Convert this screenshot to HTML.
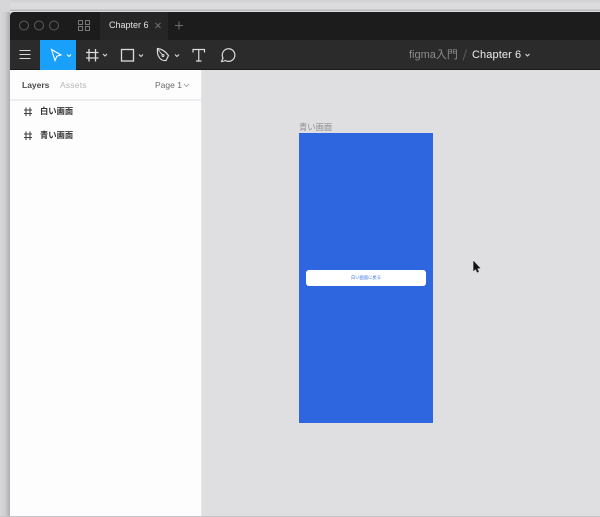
<!DOCTYPE html>
<html lang="ja">
<head>
<meta charset="utf-8">
<style>
html,body{margin:0;padding:0;width:600px;height:517px;overflow:hidden;background:#dfdee0}
*{box-sizing:border-box}
body{position:relative;font-family:"Liberation Sans","Noto Sans CJK JP",sans-serif}
.a{position:absolute}
.t{position:absolute;white-space:nowrap;line-height:1}
svg{position:absolute;overflow:visible}
#w{position:absolute;left:0;top:0;width:600px;height:517px;filter:blur(.35px)}
</style>
</head>
<body>
<div id="w">
<div class="a" style="left:0;top:0;width:600px;height:11px;background:linear-gradient(#cfced0,#dddcde 4px,#d9d8da 9px,#a9a9ab)"></div>
<div class="a" style="left:0;top:0;width:10px;height:517px;background:linear-gradient(90deg,#d8d7d9,#cfced0 5px,#aeadb0)"></div>
<div class="a" style="left:0;top:0;width:10px;height:12px;background:#d7d6d8"></div>

<div class="a" style="left:10px;top:12px;width:590px;height:28px;background:#1c1c1d;border-top-left-radius:4px"></div>
<div class="a" style="left:100px;top:12px;width:68px;height:28px;background:#262627"></div>
<div class="a" style="left:10px;top:40px;width:590px;height:30px;background:#2b2b2c;border-bottom:1px solid #1a1a1b"></div>

<svg style="left:0;top:0" width="600" height="70" fill="none" stroke="#5c5c5d" stroke-width="1">
<circle cx="24" cy="25.5" r="4.5"/><circle cx="39" cy="25.500" r="4.5"/><circle cx="54" cy="25.5" r="4.5"/>
<g stroke="#77777a"><rect x="78.5" y="20.5" width="4" height="4"/><rect x="85.5" y="20.5" width="4" height="4"/><rect x="78.5" y="26.5" width="4" height="4"/><rect x="85.5" y="26.5" width="4" height="4"/></g>
<path d="M155.500 23l5 5M160.500 23l-5 5" stroke="#6f6f70"/>
<path d="M179 21.500v8M175 25.500h8" stroke="#6f6f70"/>
</svg>
<div class="t" style="left:109px;top:21px;font-size:9px;color:#e2e2e2">Chapter 6</div>

<div class="a" style="left:40px;top:40px;width:36px;height:30px;background:#18a0fb"></div>
<svg style="left:0;top:0" width="600" height="70" fill="none" stroke="#dcdcdc" stroke-width="1.100">
<path d="M19.500 50.500h11M19.500 54.500h11M19.500 58.500h11" stroke="#d8d8d8"/>
<path d="M51.500 49.500l9.500 5.500-4.200 1.200-1.800 4.300z" stroke="#fff"/>
<path d="M67 54.500l2 2 2-2" stroke="#fff"/>
<path d="M89 49v12.500M95.500 49v12.500M86 52.500h12.500M86 58h12.500" stroke-width="1.300"/>
<path d="M103 54l2 2 2-2"/>
<rect x="121.500" y="49.500" width="12" height="11.500" stroke-width="1.300"/>
<path d="M139 54.500l2 2 2-2"/>
<path d="M157.500 48.500c4.500.5 8.500 3.500 11 7l-2.500 5c-3 .3-5-.7-6.500-2.700-1.500-2-2.500-5.300-2-9.300z" stroke-width="1.200"/>
<path d="M158 49.500l4.500 5.500" stroke-width=".9"/><circle cx="163" cy="55.500" r="1"/>
<path d="M175 54.500l2 2 2-2"/>
<path d="M193 52.500v-3h11.500v3M198.750 49.500v11.500M196 61h5.500" stroke-width="1.200"/>
<path d="M221.500 61.500l1.500-3.500a6.300 6.300 0 1 1 2.400 2.500c-1.200.6-2.600 1-3.900 1z" stroke-width="1.200"/>
<path d="M525.500 54l2 2 2-2" stroke-width="1"/>
<path d="M463 60.500l3.500-11" stroke="#59595a"/>
</svg>
<div class="t" style="left:409px;top:49.500px;font-size:11px;color:#8b8b8c">figma入門</div>
<div class="t" style="left:472px;top:49.500px;font-size:11px;color:#ececec;letter-spacing:.1px">Chapter 6</div>

<div class="a" style="left:10px;top:70px;width:192px;height:447px;background:#fefdfe;border-right:1px solid #e4e3e5"></div>
<div class="a" style="left:10px;top:99px;width:191px;height:2px;background:#efeef0"></div>
<div class="t" style="left:22px;top:80.500px;font-size:8.500px;font-weight:bold;color:#4a4a4a">Layers</div>
<div class="t" style="left:60px;top:80.500px;font-size:8.500px;color:#b5b5b5;letter-spacing:.2px">Assets</div>
<div class="t" style="left:155px;top:80.500px;font-size:8.500px;color:#6a6a6a">Page 1</div>
<svg style="left:0;top:0" width="210" height="150" fill="none" stroke="#a8a8a8">
<path d="M184 84l2.500 2.500 2.500-2.500" stroke-width=".9"/>
<g stroke="#444" stroke-width="1.100"><path d="M26 107.500v8.500M30 107.500v8.500M24 110h8M24 113.500h8"/><path d="M26 131.500v8.500M30 131.500v8.500M24 134h8M24 137.500h8"/></g>
</svg>
<div class="t" style="left:40px;top:107px;font-size:8.300px;font-weight:bold;color:#333">白い画面</div>
<div class="t" style="left:40px;top:131px;font-size:8.300px;font-weight:bold;color:#333">青い画面</div>

<div class="t" style="left:299px;top:122.500px;font-size:8.300px;color:#8f8f90">青い画面</div>
<div class="a" style="left:299px;top:133px;width:134px;height:290px;background:#2d66df"></div>
<div class="a" style="left:306px;top:270px;width:120px;height:16px;background:#fff;border-radius:3px"></div>
<div class="t" style="left:306px;top:276px;width:120px;text-align:center;font-size:4.300px;color:#3f74e0">白い画面に戻る</div>

<svg style="left:0;top:0" width="600" height="517">
<path d="M473.500 261v10l2.200-2 1.500 3.400 1.500-.7-1.500-3.300 3-.2z" fill="#111" stroke="#333" stroke-width=".4"/>
</svg>
<div class="a" style="left:0;top:516px;width:600px;height:1px;background:#c6c5c7"></div>
</div>
</body>
</html>
